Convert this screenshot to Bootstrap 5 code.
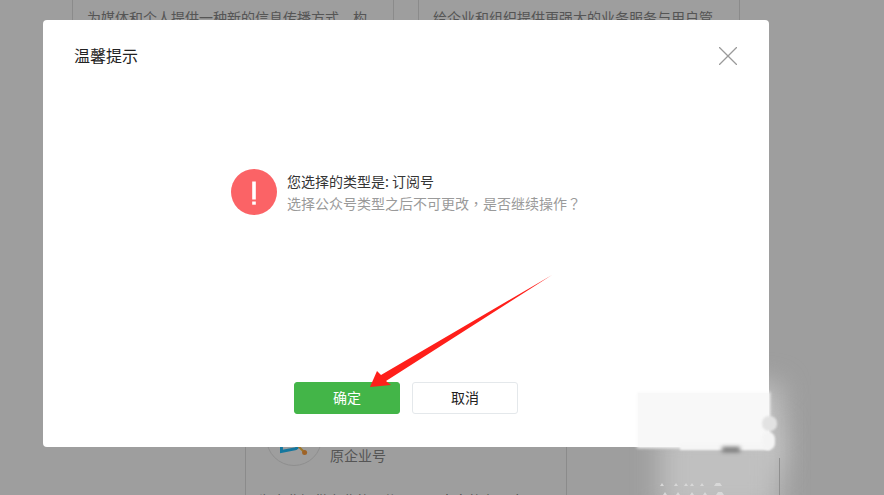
<!DOCTYPE html>
<html lang="zh">
<head>
<meta charset="utf-8">
<title>温馨提示</title>
<link href="https://cdn.jsdelivr.net/npm/bootstrap@5.3.0/dist/css/bootstrap.min.css" rel="stylesheet">
<style>
html,body{height:495px;overflow:hidden;background:#fff}
body{font:14px/20px "Noto Sans CJK SC","Liberation Sans",sans-serif;color:#353535;position:relative}
.pg-row{display:grid;grid-template-columns:322px 322px;gap:24px}
.pg-top{padding-left:72px;height:390px}
.pg-bot{padding-left:245px;height:105px}
.pg-card{border-left:1px solid #e0e0e0;border-right:1px solid #e0e0e0;min-width:0;overflow:hidden}
.pg-top .pg-card{padding:7px 14px 0}
.pg-bot .pg-card{padding:20px 14px 0 20px}
.pg-bot .pg-blank{border:0}
.pg-logo{width:56px;height:56px;border-radius:50%;border:1px solid #e6e6e6;flex:none;margin-right:8px;display:block}
.pg-name{margin-top:35px;color:#8a8a8a}
.pg-desc{margin-top:24px;margin-left:-8px;white-space:nowrap;color:#777}
.pg-text{white-space:nowrap;color:#8a8a8a}
.shade{position:absolute;inset:0;background:rgba(0,0,0,.38)}
.dlg{position:absolute;left:43px;top:20px;width:726px;height:427px;border:0;border-radius:4px;background:#fff}
.dlg-head{padding:25px 32px 0 31px;height:60px}
.dlg-title{font-size:16px;line-height:20px;font-weight:400;color:#222;margin:0}
.dlg-x{width:18px;height:18px;padding:0;border:0;background:none;margin-top:2px}
.dlg-msg{height:302px;padding-top:89px;padding-left:188px}
.dlg-ico{width:46px;height:46px;border-radius:50%;background:#fb6366;flex:none;margin-right:10px}
.dlg-text{margin-top:1px}
.dlg-line{font-size:14px;line-height:22px;white-space:nowrap}
.dlg-main{color:#353535}
.dlg-sub{color:#9a9a9a}
.wide-punct{font-family:"Noto Sans CJK TC",sans-serif}
.dlg-btns{gap:12px}
.act{width:106px;height:32px;padding:0 0 2px;font-size:14px;line-height:20px;border-radius:3px}
.act-ok{background:#43b548;border:1px solid #43b548;color:#fff}
.act-no{background:#fff;border:1px solid #e4e8eb;color:#222}
.arrow{position:absolute;left:0;top:0;width:884px;height:495px;pointer-events:none}
.smear{position:absolute;pointer-events:none}
.sm-glow{left:735px;top:385px;width:45px;height:85px;background:#c8c8c8;filter:blur(14px)}
.sm-under{left:660px;top:425px;width:120px;height:90px;background:#c0c0c0;filter:blur(14px)}
.sm-white{left:638px;top:393px;width:131px;height:54px;background:#f8f8f8;box-shadow:0 0 3px 1px #fafafa}
.sm-foot{left:680px;top:444px;width:90px;height:6px;background:#f6f6f6;filter:blur(1px)}
.sm-lump{left:762px;top:416px;width:15px;height:15px;border-radius:7px;background:#e2e2e2;filter:blur(1px)}
.sm-lump2{left:762px;top:432px;width:13px;height:18px;border-radius:7px;background:#f4f4f4;filter:blur(1px)}
.sm-dark{left:722px;top:447px;width:18px;height:5px;background:#6e6e6e;filter:blur(2px)}
.sm-line{left:779px;top:458px;width:1px;height:37px;background:#8f8f8f}
.sm-ticks{left:0;top:0}
</style>
</head>
<body>
<div class="pg-row pg-top">
  <div class="pg-card"><div class="pg-text">为媒体和个人提供一种新的信息传播方式，构</div></div>
  <div class="pg-card"><div class="pg-text">给企业和组织提供更强大的业务服务与用户管</div></div>
</div>
<div class="pg-row pg-bot">
  <div class="pg-card">
    <div class="d-flex">
      <svg class="pg-logo" viewBox="266 410 56 56" fill="none">
        <path d="M281 440V452L296 449L303 443" stroke="#22c1ff" stroke-width="3"/>
        <path d="M298 446L305 453" stroke="#ffc040" stroke-width="2"/>
        <circle cx="305" cy="453" r="2.6" fill="#ffa040"/>
      </svg>
      <div class="pg-name">原企业号</div>
    </div>
    <div class="pg-desc">为企业提供专业的通信工具、丰富的办公应用</div>
  </div>
  <div class="pg-card pg-blank"></div>
</div>
<div class="shade"></div>
<div class="smear sm-glow"></div>
<div class="smear sm-under"></div>
<div class="smear sm-line"></div>
<svg class="arrow sm-ticks" viewBox="0 0 884 495" fill="#d8d8d8">
  <path d="M660 486l2-3 2 3zM674 486l2-3 2 3zM684 486l2-3 2 3zM690 486l2-3 2 3zM700 486l2-3 2 3zM714 486l2-3 4 0 2 3z"/>
  <path d="M663 495l2-3 2 3zM676 495l2-3 2 3zM690 495l2-3 2 3zM703 495l2-3 2 3zM716 495l2-3 4 0 2 3z"/>
</svg>
<div class="modal-content dlg">
  <div class="d-flex justify-content-between align-items-start dlg-head">
    <h5 class="dlg-title">温馨提示</h5>
    <button class="dlg-x" type="button" aria-label="关闭">
      <svg width="18" height="18" viewBox="0 0 18 18" fill="none" stroke="#9a9a9a" stroke-width="1.3" class="d-block"><path d="M0 0l18 18M18 0L0 18"/></svg>
    </button>
  </div>
  <div class="d-flex dlg-msg">
    <div class="dlg-ico d-flex align-items-center justify-content-center">
      <svg width="6" height="28" viewBox="0 0 6 28" fill="#fff" class="d-block"><rect x="1.2" y="3.5" width="3.6" height="18"/><rect x="1.2" y="23.5" width="3.6" height="3.2"/></svg>
    </div>
    <div class="dlg-text">
      <div class="dlg-line dlg-main">您选择的类型是: 订阅号</div>
      <div class="dlg-line dlg-sub">选择公众号类型之后不可更改<span class="wide-punct" lang="zh-TW">，</span>是否继续操作<span class="wide-punct" lang="zh-TW">？</span></div>
    </div>
  </div>
  <div class="d-flex justify-content-center dlg-btns">
    <button class="btn act act-ok" type="button">确定</button>
    <button class="btn act act-no" type="button">取消</button>
  </div>
</div>
<div class="smear sm-white"></div>
<div class="smear sm-foot"></div>
<div class="smear sm-lump"></div>
<div class="smear sm-lump2"></div>
<div class="smear sm-dark"></div>
<svg class="arrow" viewBox="0 0 884 495"><polygon fill="#ff1f1a" points="552,275 386,381 391,385 370,387 377,371 381,375"/></svg>
<script src="https://cdn.jsdelivr.net/npm/bootstrap@5.3.0/dist/js/bootstrap.bundle.min.js"></script>
</body>
</html>
